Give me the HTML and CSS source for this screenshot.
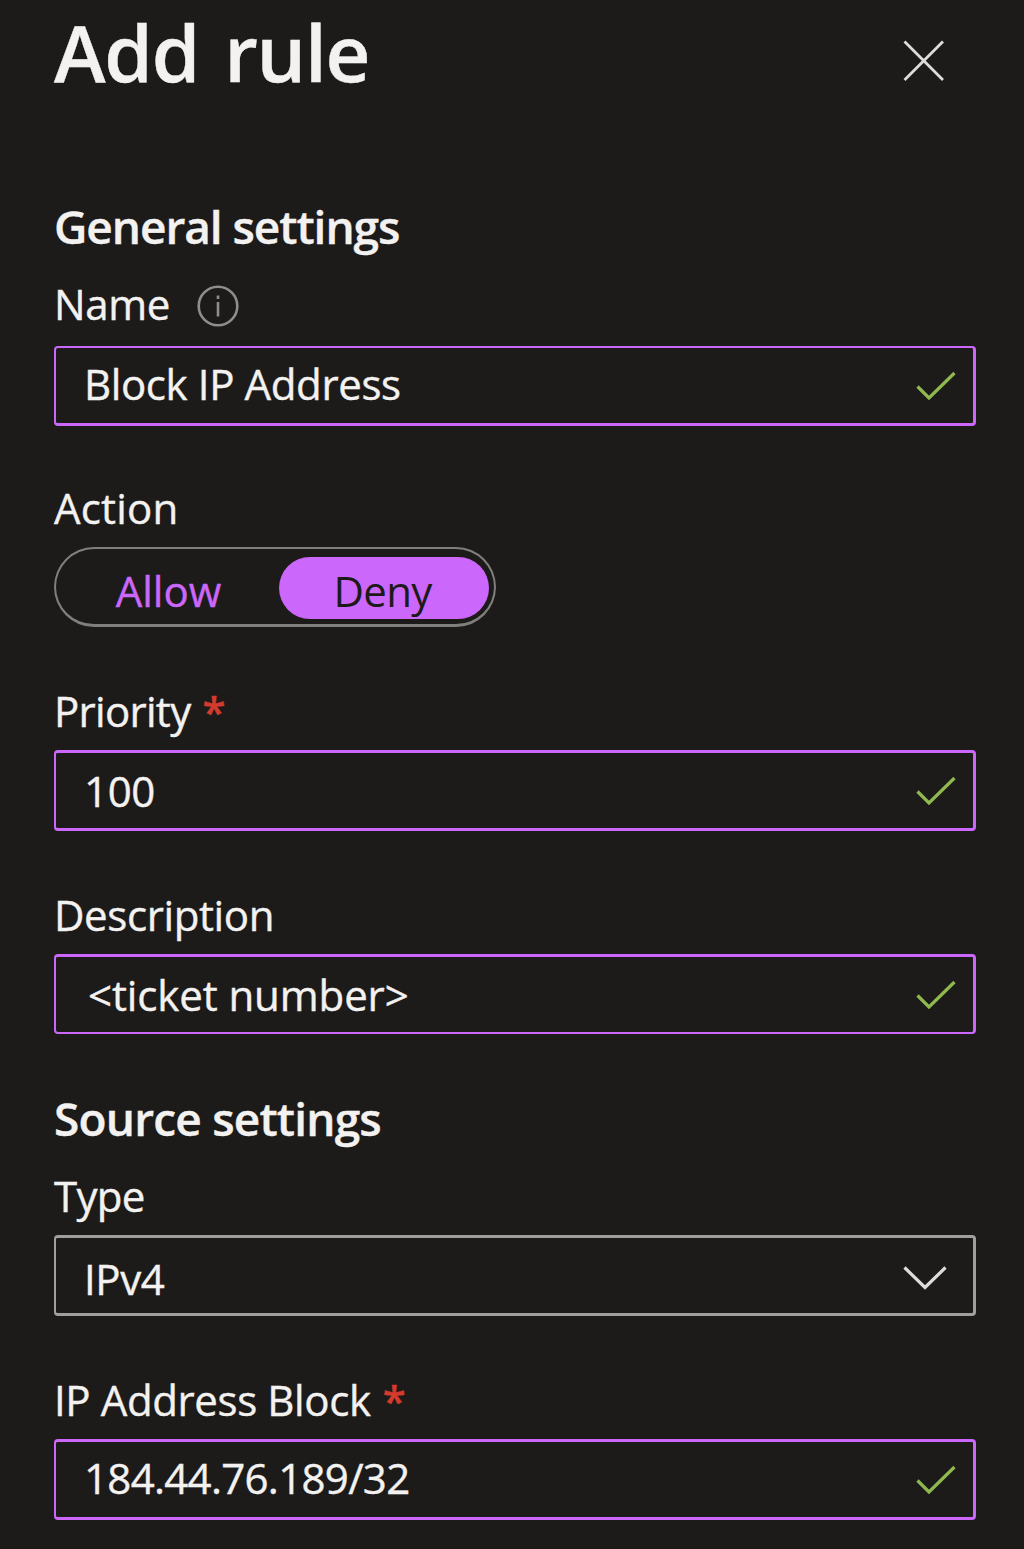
FILE: index.html
```html
<!DOCTYPE html>
<html lang="en">
<head>
<meta charset="utf-8">
<title>Add rule</title>
<link rel="stylesheet" href="styles.css">
</head>
<body>
<main class="panel">
  <header class="header">
    <h1 class="title">Add rule</h1>
    <svg class="close" viewBox="0 0 42 42" width="42" height="42"><path d="M1.5 1.5 40 40M40 1.5 1.5 40"/></svg>
  </header>

  <h2 class="section section-general">General settings</h2>
  <div class="label label-name"><span>Name</span>
    <svg class="info" viewBox="0 0 42 42" width="42" height="42"><circle cx="21" cy="21" r="19.3"/><path d="M21 10.5v3.5M21 17v14.5"/></svg>
  </div>
  <div class="input input-name"><span>Block IP Address</span>
    <svg class="check" viewBox="0 0 40 32" width="40" height="32"><path d="M1.5 15.5 13 27 38.5 2"/></svg>
  </div>

  <div class="label label-action"><span class="wide">Action</span></div>
  <div class="toggle">
    <span class="option">Allow</span>
    <span class="option selected">Deny</span>
  </div>

  <div class="label"><span class="tight">Priority</span><span class="required">*</span></div>
  <div class="input"><span>100</span>
    <svg class="check" viewBox="0 0 40 32" width="40" height="32"><path d="M1.5 15.5 13 27 38.5 2"/></svg>
  </div>

  <div class="label"><span>Description</span></div>
  <div class="input input-description"><span>&lt;ticket number&gt;</span>
    <svg class="check" viewBox="0 0 40 32" width="40" height="32"><path d="M1.5 15.5 13 27 38.5 2"/></svg>
  </div>

  <h2 class="section section-source">Source settings</h2>
  <div class="label label-type"><span class="tight">Type</span></div>
  <div class="input select"><span>IPv4</span>
    <svg class="chevron" viewBox="0 0 44 24" width="44" height="24"><path d="M1.5 1.5 22 21.5 42.5 1.5"/></svg>
  </div>

  <div class="label"><span>IP Address Block</span><span class="required">*</span></div>
  <div class="input input-address"><span class="tight">184.44.76.189/32</span>
    <svg class="check" viewBox="0 0 40 32" width="40" height="32"><path d="M1.5 15.5 13 27 38.5 2"/></svg>
  </div>
</main>
</body>
</html>
```

FILE: styles.css
```css
* { box-sizing: border-box; }

body {
  margin: 0;
  background: #1c1b19;
  color: #f3f2f1;
  font: 42px/58px "Open Sans", "Noto Sans", sans-serif;
  letter-spacing: -0.38px;
  -webkit-text-stroke: 0.4px;
}

svg { display: block; flex: none; fill: none; }

.panel { width: 1024px; height: 1549px; padding: 0 48px 0 54px; overflow: hidden; }

.header { display: flex; justify-content: space-between; height: 195px; }
.title { margin: 2px 0 0; font-size: 78px; line-height: 100px; font-weight: 600; letter-spacing: -1.2px; word-spacing: 6px; }
.close { margin: 40px 31px 0 0; stroke: #dedddc; stroke-width: 2.8; }

.section { height: 60px; margin: 0; font-size: 46px; line-height: 62px; font-weight: 600; letter-spacing: -1.05px; }
.section-source { margin-top: 53px; letter-spacing: -0.8px; }

.label { display: flex; height: 68px; margin-top: 55px; }
.label-name { height: 71px; margin-top: 20px; }
.label-action { margin-top: 53px; }
.label-type { margin-top: 20px; }
.wide { letter-spacing: 0.2px; }
.tight { letter-spacing: -0.7px; }
.required { margin-left: 12px; color: #d53a2c; font-weight: 600; }
.info { margin: 10px 0 0 27px; stroke: #8f8e8d; stroke-width: 2.6; }

.input {
  display: flex;
  align-items: center;
  justify-content: space-between;
  height: 81px;
  padding: 0 17px 0 28px;
  border: 3px solid #cb67fa;
  border-left-width: 2px;
  border-radius: 4px;
}
.input span { margin-top: 1px; }
.input-name { height: 80px; border-top-width: 2px; }
.input-name span { margin: 0 0 3px; }
.input-description { height: 80px; padding-left: 32px; border-bottom-width: 2px; }
.input-description span { letter-spacing: -0.1px; }
.input-address span { margin: 0 0 3px; }
.select { border-color: #a19f9d; padding-right: 26px; }
.select span { margin-top: 6px; }
.check { margin-top: 2px; stroke: #8fb84e; stroke-width: 3.2; }
.chevron { margin-top: 5px; stroke: #dedddc; stroke-width: 3.2; }

.toggle {
  display: flex;
  width: 442px;
  height: 80px;
  padding: 8px 5px 5px 2px;
  border: 2px solid #807f7e;
  border-bottom-width: 3px;
  border-radius: 40px;
}
.option {
  width: 221px;
  height: 62px;
  padding-top: 5px;
  border-radius: 31px;
  color: #cb67fa;
  text-align: center;
  letter-spacing: 0;
}
.selected { width: 210px; padding-right: 3px; background: #cb67fa; color: #1c1b19; letter-spacing: -0.7px; -webkit-text-stroke: 0; }
```
